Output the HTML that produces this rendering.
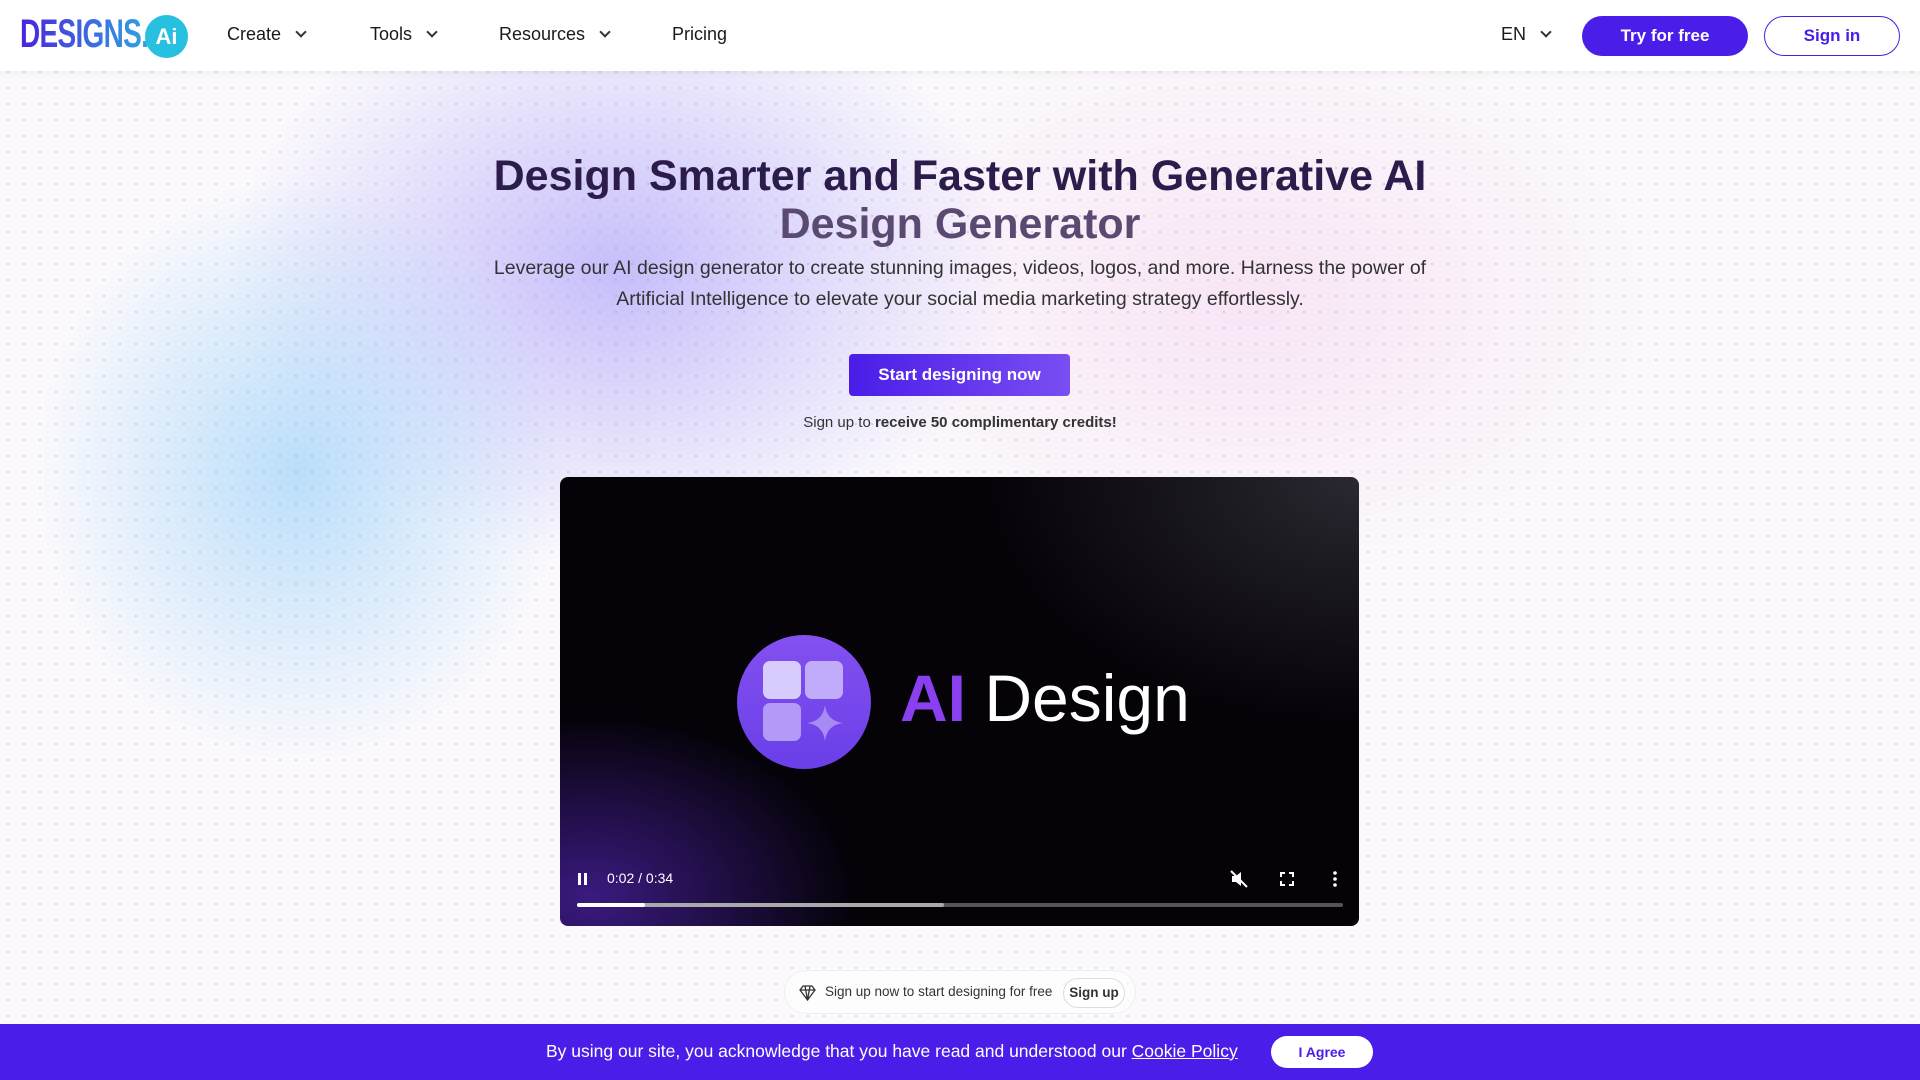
<!DOCTYPE html>
<html><head><meta charset="utf-8"><style>
*{margin:0;padding:0;box-sizing:border-box}
body{width:1920px;height:1080px;overflow:hidden;font-family:"Liberation Sans",sans-serif;position:relative;background:#fbf9fc}
.bg{position:absolute;inset:0;background:
radial-gradient(ellipse 380px 420px at 300px 470px,rgba(170,215,250,.8),transparent 70%),
radial-gradient(ellipse 560px 420px at 620px 270px,rgba(180,170,250,.75),transparent 70%),
radial-gradient(ellipse 600px 400px at 1250px 300px,rgba(245,215,240,.6),transparent 70%),#fbf9fc}
.dots{position:absolute;inset:0;background-image:radial-gradient(circle,rgba(120,120,140,.25) 1px,transparent 1.3px);background-size:16px 16px}
nav{position:absolute;top:0;left:0;width:1920px;height:71px;background:#fff;box-shadow:0 2px 8px rgba(0,0,0,.06)}
.logo{position:absolute;left:20px;top:12px;font-weight:bold;font-size:40px;letter-spacing:-1px;background:linear-gradient(90deg,#4b22e0,#2fa5e0);-webkit-background-clip:text;color:transparent;transform:scaleX(.7);transform-origin:left}
.lc{position:absolute;left:145px;top:15px;width:43px;height:43px;border-radius:50%;background:#27c0e0;color:#fff;font-weight:bold;font-size:22px;text-align:center;line-height:43px}
.ni{position:absolute;top:24px;font-size:18px;color:#1a1a1a}
.ch{display:inline-block;width:8px;height:8px;border-right:2px solid #333;border-bottom:2px solid #333;transform:rotate(45deg);margin-left:16px;position:relative;top:-4px}
.btn1{position:absolute;left:1582px;top:16px;width:166px;height:40px;border-radius:20px;background:#4a1de8;color:#fff;font-weight:bold;font-size:17px;text-align:center;line-height:40px}
.btn2{position:absolute;left:1764px;top:16px;width:136px;height:40px;border-radius:20px;border:1.5px solid #4a1de8;color:#4a1de8;font-weight:bold;font-size:17px;text-align:center;line-height:37px;background:#fff}
h1{position:absolute;top:152px;left:0;width:1920px;text-align:center;font-size:43px;line-height:48px;color:#2c1c4c;font-weight:bold}
h1 span{color:#5a4a72}
p.sub{position:absolute;top:253px;left:490px;width:940px;text-align:center;font-size:19.5px;line-height:31px;color:#333}
.cta{position:absolute;left:849px;top:354px;width:221px;height:42px;border-radius:4px;background:linear-gradient(90deg,#4a1de8,#7a4ef2);color:#fff;font-weight:bold;font-size:17px;text-align:center;line-height:42px}
.note{position:absolute;top:414px;width:1920px;text-align:center;font-size:15px;color:#333}
.video{position:absolute;left:560px;top:477px;width:799px;height:449px;border-radius:8px;overflow:hidden;background:radial-gradient(ellipse 380px 260px at 30px 420px,#3a1a80,transparent 70%),radial-gradient(ellipse 500px 330px at 800px 0,#2a2830,transparent 75%),#050208}
.circ{position:absolute;left:177px;top:158px;width:134px;height:134px;border-radius:50%;background:linear-gradient(#8350f0,#6a3fe8)}
.sq{position:absolute;border-radius:7px}
.ait{position:absolute;left:340px;top:183px;font-size:66px;color:#fff}
.ait b{color:#8a40f0}
.ctl{position:absolute;color:#fff;font-size:14px}
.bar{position:absolute;left:17px;top:426px;width:766px;height:4px;background:#555;border-radius:2px}
footer{position:absolute;left:0;top:1024px;width:1920px;height:56px;background:#4a1de8;color:#fff;font-size:17.5px}
.pill{position:absolute;left:784px;top:970px;width:352px;height:44px;border-radius:22px;border:1px solid #eee;background:rgba(255,255,255,.6);font-size:13.5px;color:#333}
</style></head><body>
<div class="bg"></div><div class="dots"></div>
<nav>
<div class="logo">DESIGNS.</div><div class="lc">Ai</div>
<div class="ni" style="left:227px">Create<span class="ch"></span></div>
<div class="ni" style="left:370px">Tools<span class="ch"></span></div>
<div class="ni" style="left:499px">Resources<span class="ch"></span></div>
<div class="ni" style="left:672px">Pricing</div>
<div class="ni" style="left:1501px">EN<span class="ch"></span></div>
<div class="btn1">Try for free</div><div class="btn2">Sign in</div>
</nav>
<h1>Design Smarter and Faster with Generative AI<br><span>Design Generator</span></h1>
<p class="sub">Leverage our AI design generator to create stunning images, videos, logos, and more. Harness the power of Artificial Intelligence to elevate your social media marketing strategy effortlessly.</p>
<div class="cta">Start designing now</div>
<div class="note">Sign up to <b>receive 50 complimentary credits!</b></div>
<div class="video">
<div class="circ">
<div class="sq" style="left:26px;top:26px;width:38px;height:38px;background:#d8ccff"></div>
<div class="sq" style="left:68px;top:26px;width:38px;height:38px;background:#c0acfa"></div>
<div class="sq" style="left:26px;top:68px;width:38px;height:38px;background:#b29af6"></div>
<svg style="position:absolute;left:68px;top:68px" width="40" height="40" viewBox="0 0 40 40"><path d="M20 2Q22 18 38 20Q22 22 20 38Q18 22 2 20Q18 18 20 2Z" fill="#a88af4"/></svg>
</div>
<div class="ait"><b>AI</b> Design</div>
<svg class="ctl" style="left:17px;top:395px" width="12" height="14"><rect x="1" y="1" width="3" height="12" fill="#fff"/><rect x="7" y="1" width="3" height="12" fill="#fff"/></svg>
<div class="ctl" style="left:47px;top:393px">0:02 / 0:34</div>
<svg class="ctl" style="left:670px;top:393px" width="18" height="18" viewBox="0 0 18 18"><path d="M2 6h4l5-4v14l-5-4H2z" fill="#fff"/><path d="M1 1l16 16" stroke="#fff" stroke-width="2"/></svg>
<svg class="ctl" style="left:720px;top:395px" width="14" height="14"><path d="M1 5V1h4M9 1h4v4M13 9v4H9M5 13H1V9" stroke="#fff" stroke-width="2" fill="none"/></svg>
<svg class="ctl" style="left:773px;top:394px" width="4" height="16"><circle cx="2" cy="2" r="1.8" fill="#fff"/><circle cx="2" cy="8" r="1.8" fill="#fff"/><circle cx="2" cy="14" r="1.8" fill="#fff"/></svg>
<div class="bar"><div style="position:absolute;left:0;top:0;width:367px;height:4px;background:#aaa;border-radius:2px"></div><div style="position:absolute;left:0;top:0;width:68px;height:4px;background:#fff;border-radius:2px"></div></div>
</div>
<div class="pill">
<svg style="position:absolute;left:14px;top:14px" width="17" height="16" viewBox="0 0 17 16"><path d="M4 1h9l3 4-7.5 10L1 5z M1 5h15 M6 1l2.5 14 M11 1l-2.5 14" stroke="#333" stroke-width="1.3" fill="none"/></svg>
<span style="position:absolute;left:40px;top:13px">Sign up now to start designing for free</span>
<span style="position:absolute;left:278px;top:7px;width:62px;height:30px;border:1px solid #ddd;border-radius:15px;text-align:center;line-height:28px;font-weight:bold;background:#fff">Sign up</span>
</div>
<footer>
<span style="position:absolute;left:546px;top:17px">By using our site, you acknowledge that you have read and understood our <u>Cookie Policy</u></span>
<span style="position:absolute;left:1271px;top:12px;width:102px;height:32px;border-radius:16px;background:#fff;color:#4a1de8;font-weight:bold;font-size:14px;text-align:center;line-height:32px">I Agree</span>
</footer>
</body></html>
